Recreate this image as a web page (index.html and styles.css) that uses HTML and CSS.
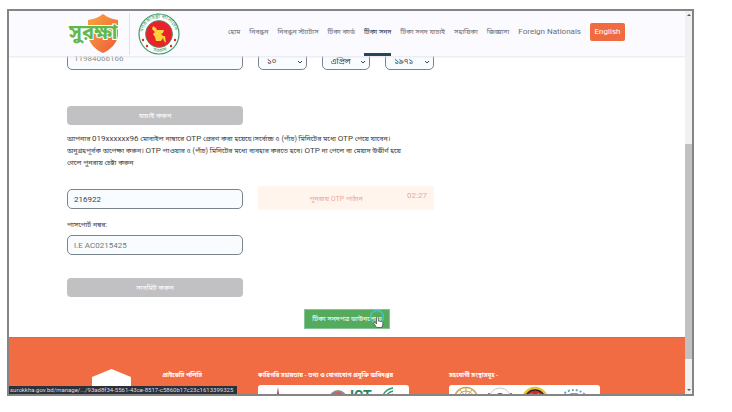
FILE: index.html
```html
<!DOCTYPE html>
<html lang="bn">
<head>
  <meta charset="UTF-8">
  <meta name="viewport" content="width=device-width, initial-scale=1.0">
  <title>সুরক্ষা - টিকা সনদ</title>
  <link rel="stylesheet" href="styles.css">
</head>
<body>
  <div class="window">
    <div class="page">
      <header class="header">
        <a class="brand" href="#" aria-label="সুরক্ষা">
          <svg width="54" height="42" viewBox="0 0 54 42">
            <defs>
              <linearGradient id="shield" x1="0" y1="0" x2="1" y2="1">
                <stop offset="0" stop-color="#f9a53c"/>
                <stop offset="1" stop-color="#ee5b3b"/>
              </linearGradient>
            </defs>
            <path d="M36 1 C31 5 26 6 21 7 V22 C22 31 29 37 36 40 C43 37 50 31 51 22 V7 C46 6 41 5 36 1Z" fill="url(#shield)"/>
            <text class="brand-text" x="2" y="26">সুরক্ষা</text>
          </svg>
        </a>
        <svg class="seal" width="44" height="44" viewBox="0 0 44 44">
          <defs>
            <path id="seal-top" d="M6 22 A16 16 0 0 1 38 22"/>
            <path id="seal-bottom" d="M4 22 A18 18 0 0 0 40 22"/>
          </defs>
          <circle cx="22" cy="22" r="20" fill="#fff" stroke="#3f9c69" stroke-width="1.2"/>
          <circle cx="22" cy="22" r="13.5" fill="#e8222a" stroke="#3f9c69" stroke-width=".8"/>
          <text class="seal-text"><textPath href="#seal-top" startOffset="2">গণপ্রজাতন্ত্রী বাংলাদেশ</textPath></text>
          <text class="seal-text"><textPath href="#seal-bottom" startOffset="22">সরকার</textPath></text>
          <path d="M16 14 L19 16 L20 18 L27 18 L26 21 L24 22 L26 24 L28 24 L29 31 L27 29 L26 26 L24 29 L19 29 L18 25 L16 22 L18 20 L15 17Z" fill="#fbd23c"/>
          <g fill="#e8222a">
            <circle cx="6" cy="28" r="1.2"/><circle cx="10" cy="34" r="1.2"/>
            <circle cx="38" cy="28" r="1.2"/><circle cx="34" cy="34" r="1.2"/>
          </g>
        </svg>
        <nav class="nav">
          <a href="#">হোম</a>
          <a href="#">নিবন্ধন</a>
          <a href="#">নিবন্ধন স্ট্যাটাস</a>
          <a href="#">টিকা কার্ড</a>
          <a href="#" class="active">টিকা সনদ</a>
          <a href="#">টিকা সনদ যাচাই</a>
          <a href="#">সহায়িকা</a>
          <a href="#">জিজ্ঞাসা</a>
          <a href="#" class="latin">Foreign Nationals</a>
          <button type="button" class="lang latin">English</button>
        </nav>
      </header>

      <main class="content">
        <form class="form">
          <input class="field nid" type="text" value="11984066166" aria-label="জাতীয় পরিচয়পত্র নম্বর">
          <div class="dob">
            <select class="field" aria-label="দিন"><option>১০</option></select>
            <select class="field" aria-label="মাস"><option>এপ্রিল</option></select>
            <select class="field" aria-label="বছর"><option>১৯৭১</option></select>
          </div>
          <button type="button" class="btn verify">যাচাই করুন</button>
          <p class="note">আপনার <span class="latin">019xxxxxx96</span> মোবাইল নাম্বারে <span class="latin">OTP</span> প্রেরণ করা হয়েছে।সর্বোচ্চ ৫ (পাঁচ) মিনিটের মধ্যে <span class="latin">OTP</span> পেয়ে যাবেন।<br>
            অনুগ্রহপূর্বক অপেক্ষা করুন। <span class="latin">OTP</span> পাওয়ার ৫ (পাঁচ) মিনিটের মধ্যে ব্যবহার করতে হবে। <span class="latin">OTP</span> না পেলে বা মেয়াদ উত্তীর্ণ হয়ে<br>
            গেলে পুনরায় চেষ্টা করুন</p>
          <input class="field otp" type="text" value="216922" aria-label="OTP">
          <div class="resend">
            <button type="button">পুনরায় OTP পাঠান</button>
            <span class="latin">02:27</span>
          </div>
          <label class="label" for="passport">পাসপোর্ট নম্বর:</label>
          <input class="field passport" id="passport" type="text" placeholder="I.E AC0215425">
          <button type="button" class="btn submit">সাবমিট করুন</button>
        </form>
        <div class="download-row">
          <button type="button" class="download">টিকা সনদপত্র ডাউনলোড
            <svg class="cursor" width="20" height="22" viewBox="0 0 20 22">
              <circle cx="8" cy="8" r="6.5" fill="none" stroke="#43c6bd" stroke-width="1.6"/>
              <path d="M7.5 18.5 L5 14.5 C4.5 13.5 6 13 6.8 14 L7.5 15 V8.5 C7.5 7.3 9.3 7.3 9.3 8.5 V12 L13 12.6 C14 12.9 14 14 13.8 15 L13 18.5Z" fill="#fff" stroke="#444" stroke-width=".7"/>
            </svg>
          </button>
        </div>
      </main>

      <footer class="footer">
        <svg class="footer-logo" width="39" height="26" viewBox="0 0 39 26">
          <path d="M19.5 0 L39 8 V26 H0 V8Z" fill="#fff"/>
        </svg>
        <h2 class="policy">প্রাইভেসি পলিসি</h2>
        <div class="tech">
          <h2>কারিগরি সহায়তায় - তথ্য ও যোগাযোগ প্রযুক্তি অধিদপ্তর</h2>
          <svg class="logos" viewBox="0 0 151 20">
            <rect width="151" height="26" rx="3" fill="#fff"/>
            <path d="M17 20 L19 9 L20 2 L21 9 L23 20Z" fill="#b8325a"/>
            <path d="M72 14 A8 8 0 0 1 88 14Z" fill="#e7544f" stroke="#8f8f8f" stroke-width="2"/>
            <text class="ict" x="92" y="16">ICT</text>
            <g fill="none" stroke="#2b9a67" stroke-width="1.3">
              <path d="M124 14 C125 8 129 4 135 3"/>
              <path d="M127 14 C128 9 131 7 135 6"/>
              <path d="M130 14 C131 11 133 10 135 9"/>
            </g>
          </svg>
        </div>
        <div class="partners">
          <h2>সহযোগী সংস্থাসমূহ -</h2>
          <svg class="logos" viewBox="0 0 151 20">
            <rect width="151" height="26" rx="3" fill="#fff"/>
            <g fill="none" stroke="#c5a551">
              <circle cx="17" cy="14" r="11.5" stroke-width="1.5"/>
              <circle cx="17" cy="14" r="8"/>
              <path d="M9 10 H25 M17 3 V14 M11 5 L17 12 L23 5"/>
            </g>
            <circle cx="51" cy="14" r="11" fill="none" stroke="#c9c9c9"/>
            <circle cx="51" cy="12" r="4" fill="#df2436"/>
            <path d="M40 8 V14 M62 8 V14" stroke="#356d58" stroke-width="1.5"/>
            <circle cx="86" cy="15" r="12" fill="#222" stroke="#e5c42b" stroke-width="2.5"/>
            <circle cx="86" cy="15" r="8.5" fill="#fff" stroke="#d8232c" stroke-width="2"/>
            <path d="M80 11 L86 6 L92 11Z" fill="#d8232c"/>
            <circle cx="125" cy="20" r="15" fill="none" stroke="#6ba6c8" stroke-width="2" stroke-dasharray="2 2"/>
            <circle cx="125" cy="20" r="12" fill="#3a8dc3"/>
            <path d="M119 11 L125 9 L131 11" fill="none" stroke="#fff"/>
          </svg>
        </div>
      </footer>
      <div class="status">surokkha.gov.bd/manage/.../93ad8f34-5561-43ce-8517-c5860b17c23c1613399325</div>
    </div>
    <div class="scrollbar">
      <span class="arrow-up"></span>
      <span class="thumb"></span>
      <span class="arrow-down"></span>
    </div>
  </div>
</body>
</html>
```
FILE: styles.css
```css
* {
  box-sizing: border-box;
}

body {
  margin: 0;
  height: 100vh;
  padding: 9px 38px 16px 7px;
  background-color: #fff;
  color: #3c3c3c;
  font-family: Roboto, "Noto Sans Bengali", sans-serif;
  font-size: 7px;
  line-height: 12px;
}

button, input, select {
  font: inherit;
  color: inherit;
}

button {
  cursor: pointer;
  padding: 0;
  border: none;
}

a {
  color: inherit;
  text-decoration: none;
}

.latin {
  font-size: 8px;
}

.window {
  display: flex;
  height: 100%;
  border: 2px solid #858585;
}

.page {
  position: relative;
  flex: 1;
  display: flex;
  flex-direction: column;
  min-width: 0;
  overflow: hidden;
}

.header {
  position: relative;
  z-index: 1;
  flex: none;
  display: flex;
  align-items: center;
  height: 45px;
  padding: 0 60px 0 58px;
  background-color: #fafaff;
  box-shadow: 0 1px 2px #e6e6ec;
}

.brand {
  display: flex;
  padding-right: 8px;
  border-right: 1px solid #e2e2ea;
}

.brand-text {
  font-size: 20px;
  font-weight: bold;
  fill: #62b84c;
  stroke: #fff;
  stroke-width: 2px;
  paint-order: stroke;
}

.seal {
  margin-left: 7px;
}

.seal-text {
  font-size: 5px;
  fill: #3f9c69;
}

.nav {
  display: flex;
  align-items: center;
  align-self: stretch;
  gap: 9px;
  margin-left: auto;
  color: #6c6f7a;
  white-space: nowrap;
}

.nav a {
  display: flex;
  align-items: center;
  align-self: stretch;
  border-bottom: 3px solid transparent;
}

.nav .active {
  border-color: #24475c;
  color: #24364c;
}

.lang {
  width: 35px;
  height: 18px;
  margin-bottom: 3px;
  border-radius: 2px;
  background-color: #f16b41;
  color: #fff;
}

.content {
  flex: none;
  height: 287px;
  margin-top: -6px;
  overflow: hidden;
}

.form {
  display: grid;
  grid-template-columns: repeat(3, 1fr);
  column-gap: 15px;
  padding: 0 60px 0 58px;
}

.field {
  width: 100%;
  height: 20px;
  padding: 0 6px;
  border: 1px solid #7b838c;
  border-radius: 5px;
  background-color: #f8fcff;
  font-size: 8px;
}

.nid {
  padding-bottom: 4px;
  color: #888;
}

.dob {
  display: grid;
  grid-template-columns: repeat(3, 1fr);
  gap: 15px;
}

.dob .field {
  appearance: none;
  padding: 3px 8px 0;
  background-image: url("data:image/svg+xml,%3Csvg xmlns='http://www.w3.org/2000/svg' viewBox='0 0 6 4'%3E%3Cpath d='M1 1l2 2 2-2' fill='none' stroke='%23444'/%3E%3C/svg%3E");
  background-repeat: no-repeat;
  background-position: right 3px top 9px;
  background-size: 6px 4px;
}

.btn {
  grid-column: 1;
  height: 19px;
  border-radius: 4px;
  background-color: #c1c1c3;
  color: #fff;
}

.verify {
  margin-top: 36px;
}

.note {
  grid-column: 1 / -1;
  margin: 8px 0 20px;
  white-space: nowrap;
}

.otp {
  grid-column: 1;
}

.resend {
  display: grid;
  grid-template-columns: 1fr auto;
  height: 24px;
  margin: -3px 0 0;
  padding: 0 7px;
  border-radius: 2px;
  background-color: #fff5ed;
  color: #f0a596;
}

.resend button {
  padding-top: 2px;
  background: none;
}

.resend span {
  padding-top: 4px;
}

.label {
  grid-column: 1;
  margin: 9px 0 4px;
}

.passport {
  grid-column: 1;
}

.passport::placeholder {
  color: #777;
  opacity: 1;
}

.submit {
  margin-top: 23px;
}

.download-row {
  display: flex;
  justify-content: center;
  margin-top: 12px;
}

.download {
  position: relative;
  width: 86px;
  height: 20px;
  border: 1px solid #84c498;
  background-color: #55aa5c;
  color: #fff;
  white-space: nowrap;
}

.cursor {
  position: absolute;
  right: 0;
  bottom: -3px;
}

.footer {
  flex: 1;
  display: grid;
  grid-template-columns: repeat(6, 1fr);
  column-gap: 15px;
  padding: 31px 60px 0 58px;
  border-top: 1px solid #d96a48;
  background-color: #f26c43;
  color: #fff;
}

.footer h2 {
  margin: 0;
  font-size: 6px;
  line-height: 12px;
  white-space: nowrap;
}

.footer-logo {
  justify-self: end;
  margin-right: 17px;
}

.tech, .partners {
  grid-column: span 2;
}

.logos {
  display: block;
  width: 151px;
  height: 20px;
  margin-top: 4px;
}

.ict {
  font-size: 14px;
  font-weight: bold;
  fill: #238761;
}

.status {
  position: absolute;
  left: 0;
  bottom: 0;
  padding: 0 4px 0 1px;
  background-color: #2b3136;
  color: #dde;
  font-size: 6px;
  line-height: 8px;
}

.scrollbar {
  display: flex;
  flex-direction: column;
  justify-content: space-between;
  align-items: center;
  width: 7px;
  padding: 3px 0;
  background-color: #f1f1f1;
}

.thumb {
  width: 100%;
  height: 57%;
  margin-top: auto;
  margin-bottom: 30px;
  background-color: #c1c1c1;
}

.arrow-up, .arrow-down {
  border: 2px solid transparent;
}

.arrow-up {
  border-top: none;
  border-bottom-color: #555;
}

.arrow-down {
  border-bottom: none;
  border-top-color: #555;
}
```
